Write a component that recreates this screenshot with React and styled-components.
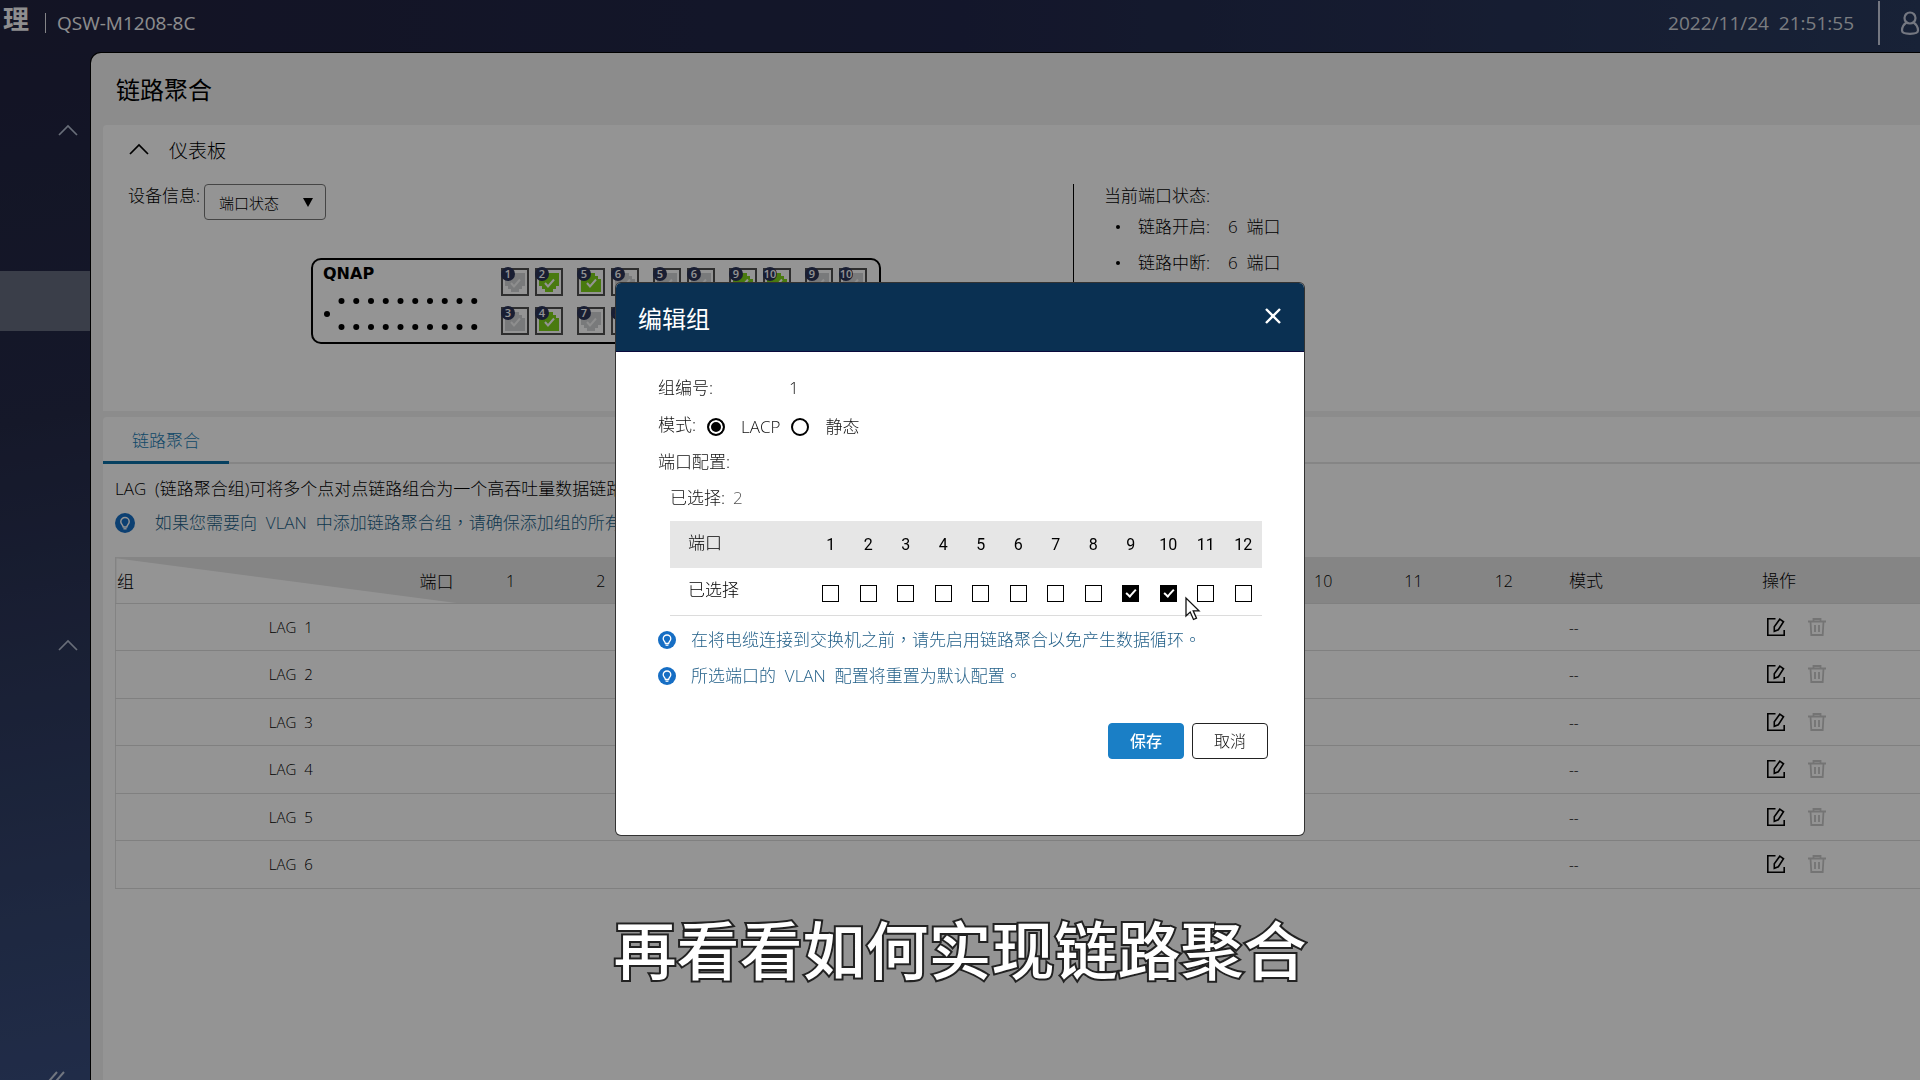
import React, { useState } from "react";
import styled, { createGlobalStyle, css } from "styled-components";

const GlobalStyle = createGlobalStyle`
  *, *::before, *::after { box-sizing: border-box; }
  body {
    margin: 0;
    overflow: hidden;
    font-family: "Open Sans", "Noto Sans CJK TC", "Noto Sans CJK SC", sans-serif;
    font-size: 17px;
    font-weight: 300;
    line-height: 24px;
    color: #000;
  }
  button, input, select { font: inherit; color: inherit; margin: 0; }
`;

const Page = styled.div`
  display: flex;
  flex-direction: column;
  height: 100vh;
  background: linear-gradient(170deg, #20223f 0%, #252a48 30%, #34456f 65%, #405a97 100%);
`;

const TopBar = styled.header`
  display: flex;
  align-items: center;
  height: 53px;
  flex: none;
  overflow: hidden;
  padding-left: 3px;
  padding-bottom: 8px;
  color: #f4f4f6;
  background: linear-gradient(90deg, #21233f 0%, #22274a 50%, #2a3b5f 100%);
`;

const Product = styled.span`
  font-size: 26px;
  font-weight: 700;
  line-height: 36px;
  margin-top: -8px;
`;

const ThinRule = styled.span`
  width: 1px;
  height: 20px;
  margin: 0 11px 0 16px;
  background: #e4e4e8;
`;

const Model = styled.span`
  flex: 1;
  font-size: 19px;
  font-weight: 400;
`;

const Clock = styled.time`
  font-size: 19px;
  font-weight: 400;
  color: #d4d7df;
`;

const UserButton = styled.button`
  display: flex;
  align-items: center;
  height: 44px;
  width: 42px;
  flex: none;
  margin-left: 24px;
  padding: 0 0 0 20px;
  border: 0;
  border-left: 2px solid #c9cede;
  background: none;
  color: #c9cede;
  svg { flex: none; }
`;

const Body = styled.div`
  display: flex;
  flex: 1;
  min-height: 0;
`;

const Sidebar = styled.nav`
  width: 91px;
  flex: none;
  display: flex;
  flex-direction: column;
  overflow: hidden;
`;

const NavToggle = styled.button`
  display: flex;
  justify-content: flex-end;
  align-items: center;
  width: 100%;
  height: ${(p) => p.$height}px;
  flex: none;
  padding: 0 13px 0 0;
  border: 0;
  background: none;
  color: #b4bdd0;
`;

const NavCurrent = styled.a`
  display: block;
  height: 60px;
  flex: none;
  background: #646b7f;
`;

const NavGap = styled.div`
  height: ${(p) => p.$height}px;
  flex: none;
`;

const NavCollapse = styled.button`
  margin-top: auto;
  padding: 0 26px 0 0;
  height: 10px;
  flex: none;
  border: 0;
  overflow: hidden;
  background: none;
  color: #c3cbdc;
  display: flex;
  align-items: flex-start;
  justify-content: flex-end;
  svg { flex: none; }
`;

const Panel = styled.main`
  flex: 1;
  min-width: 0;
  display: flex;
  flex-direction: column;
  gap: 6px;
  padding-left: 12px;
  border-top-left-radius: 10px;
  background: #f2f2f2;
  box-shadow: 0 0 0 1px #000;
`;

const PageTitle = styled.h1`
  margin: 0;
  padding: 21px 13px 13px;
  font-size: 24px;
  line-height: 32px;
  font-weight: 400;
`;

const Card = styled.section`
  background: #fff;
  border-top-left-radius: 4px;
  ${(p) => p.$grow && css`flex: 1;`}
`;

const Dashboard = styled(Card)`
  height: 286px;
  padding: 13px 0 16px 26px;
`;

const Fold = styled.button`
  display: flex;
  align-items: center;
  gap: 20px;
  height: 26px;
  padding: 0;
  border: 0;
  background: none;
  font-size: 19px;
  svg { margin-bottom: 4px; }
`;

const DashGrid = styled.div`
  display: grid;
  grid-template-columns: 944px 1fr;
  height: 206px;
  margin-top: 20px;
`;

const DeviceArea = styled.div`
  display: flex;
  flex-direction: column;
  align-items: center;
  gap: 38px;
  padding-right: 10px;
`;

const Field = styled.div`
  display: flex;
  align-self: stretch;
  align-items: flex-start;
  gap: 4px;
  margin-left: -1px;
`;

const SelectWrap = styled.span`
  position: relative;
  display: inline-flex;
  svg {
    position: absolute;
    right: 13px;
    top: 13px;
    pointer-events: none;
  }
`;

const Select = styled.select`
  appearance: none;
  width: 122px;
  height: 36px;
  padding: 2px 30px 0 14px;
  border: 1px solid #777;
  border-radius: 4px;
  background: #fff;
  font-size: 15px;
`;

const Device = styled.div`
  display: flex;
  width: 570px;
  height: 86px;
  padding: 8px 10px 0;
  border: 2px solid #000;
  border-radius: 10px;
`;

const DeviceFace = styled.div`
  width: 178px;
  flex: none;
`;

const Brand = styled.div`
  font-family: "DejaVu Sans", sans-serif;
  font-size: 16px;
  font-weight: 700;
  line-height: 12px;
  margin-bottom: 9px;
`;

const PortGroups = styled.div`
  display: flex;
  gap: 14px;
  height: 68px;
`;

const PortGroup = styled.div`
  display: grid;
  grid-template-columns: 28px 28px;
  grid-auto-rows: 28px;
  gap: 11px 6px;
`;

const PortBox = styled.span`
  position: relative;
  border: 2px solid #505050;
  svg { display: block; margin: -2px; }
`;

const PortBadge = styled.span`
  position: absolute;
  left: -2px;
  top: -3px;
  width: 14px;
  height: 14px;
  border-radius: 50%;
  background: #2b3458;
  color: #fff;
  font-family: "Open Sans", sans-serif;
  font-size: 11px;
  font-weight: 600;
  line-height: 14px;
  display: flex;
  justify-content: center;
`;

const Status = styled.div`
  border-left: 1px solid #000;
  padding-left: 30px;
`;

const StatusList = styled.ul`
  list-style: none;
  margin: 0;
  padding: 7px 0 0 12px;
  display: grid;
  gap: 12px;
`;

const StatusItem = styled.li`
  display: grid;
  grid-template-columns: 22px 90px auto;
  justify-content: start;
  align-items: center;
  &::before {
    content: "";
    width: 4px;
    height: 4px;
    border-radius: 50%;
    background: #000;
  }
`;

const Tabs = styled.div`
  display: flex;
  height: 47px;
  border-bottom: 2px solid #e6e6e6;
`;

const Tab = styled.button`
  width: 126px;
  height: 47px;
  padding: 3px 0 0;
  border: 0;
  border-bottom: 3px solid #0c6ea6;
  background: none;
  color: #1c7db4;
`;

const LagBody = styled.div`
  padding: 13px 0 0 12px;
`;

const Text = styled.p`
  margin: 0;
  white-space: nowrap;
`;

const Hint = styled.p`
  display: flex;
  align-items: center;
  gap: ${(p) => p.$gap}px;
  margin: ${(p) => p.$space}px 0 0;
  color: #225f88;
  white-space: nowrap;
  svg { flex: none; }
`;

const LagTable = styled.table`
  width: 100%;
  margin-top: 22px;
  table-layout: fixed;
  border-collapse: collapse;
  border-left: 1px solid #e2e2e2;
  th, td { padding: 0; font-weight: 300; text-align: center; }
  th { height: 46px; background: #e6e6e6; border-bottom: 1px solid #dcdcdc; }
  td { height: 47px; padding-bottom: 1px; border-bottom: 1px solid #dcdcdc; font-size: 15px; }
  tr:nth-child(even) td { height: 48px; }
`;

const Col = styled.col`
  ${(p) => p.$w && css`width: ${p.$w}px;`}
`;

const Corner = styled.div`
  display: flex;
  align-items: center;
  justify-content: space-between;
  height: 46px;
  margin-right: 12px;
  padding: 4px 0 0 1px;
`;

const CornerTh = styled.th`
  && { background: linear-gradient(to top right, #fff 48%, #e6e6e6 49%); }
`;

const LeftTh = styled.th`
  &&& { text-align: left; padding-left: 20px; padding-top: 2px; }
`;

const LeftTd = styled.td`
  && { text-align: left; padding-left: 20px; }
`;

const NumTh = styled.th`
  && { font-size: 16px; padding-top: 2px; }
`;

const Actions = styled.div`
  display: flex;
  gap: 22px;
  padding-left: 4px;
`;

const IconButton = styled.button`
  display: flex;
  padding: 0;
  border: 0;
  background: none;
  color: ${(p) => (p.disabled ? "#c9c9c9" : "#000")};
`;

const Overlay = styled.div`
  position: fixed;
  inset: 0;
  display: flex;
  align-items: center;
  justify-content: center;
  padding-top: 38px;
  background: rgba(0, 0, 0, 0.42);
`;

const Modal = styled.form`
  width: 688px;
  height: 552px;
  border-radius: 5px;
  overflow: hidden;
  background: #fff;
  box-shadow: 0 0 0 1px #333;
`;

const ModalHead = styled.div`
  display: flex;
  align-items: center;
  justify-content: space-between;
  height: 69px;
  padding: 4px 22px 0 22px;
  border-bottom: 1px solid #0a0a3c;
  background: #0a3052;
  color: #fff;
`;

const ModalTitle = styled.h2`
  margin: 0;
  font-size: 24px;
  line-height: 32px;
  font-weight: 400;
`;

const CloseButton = styled.button`
  display: flex;
  padding: 0;
  margin-bottom: 6px;
  border: 0;
  background: none;
`;

const ModalBody = styled.div`
  padding: 17px 36px 0 42px;
`;

const Row = styled.div`
  display: flex;
  align-items: center;
  height: 37px;
  color: #111;
`;

const GroupLabel = styled.span`
  width: 131px;
`;

const RadioLabel = styled.label`
  display: flex;
  align-items: center;
  gap: 16px;
  margin-left: 11px;
  padding-top: 4px;
`;

const Radio = styled.input`
  appearance: none;
  width: 18px;
  height: 18px;
  border: 2px solid #000;
  border-radius: 50%;
  background: #fff;
  &:checked { background: #000; box-shadow: inset 0 0 0 2px #fff; }
`;

const Picked = styled.div`
  padding: 6px 0 11px 12px;
  color: #111;
  span { color: #555; margin-left: 8px; }
`;

const PortTable = styled.table`
  width: 592px;
  margin-left: 12px;
  table-layout: fixed;
  border-collapse: collapse;
  th, td { padding: 0; height: 47px; text-align: center; vertical-align: middle; }
  td { padding-top: 2px; }
  thead th { background: #e6e6e6; font-family: Roboto, "Noto Sans CJK TC", sans-serif; font-size: 16px; font-weight: 400; }
  tbody tr { border-bottom: 1px solid #dcdcdc; }
`;

const RowTh = styled.th`
  &&&& { text-align: left; padding: 0 0 3px 18px; font-weight: 300; font-size: 17px; }
`;

const Check = styled.input`
  appearance: none;
  display: inline-block;
  position: relative;
  width: 17px;
  height: 17px;
  border: 1px solid #000;
  vertical-align: middle;
  background: #fff;
  &:checked { background: #000; }
  &:checked::after {
    content: "";
    position: absolute;
    left: 3px;
    top: 3px;
    width: 10px;
    height: 6px;
    border-left: 2px solid #fff;
    border-bottom: 2px solid #fff;
    transform: rotate(-48deg);
  }
`;

const Footer = styled.div`
  display: flex;
  justify-content: flex-end;
  gap: 8px;
  margin-top: 35px;
`;

const Button = styled.button`
  width: 76px;
  height: 36px;
  padding: 0;
  border-radius: 4px;
  border: 1px solid ${(p) => (p.$primary ? "#1a7fc6" : "#222")};
  background: ${(p) => (p.$primary ? "#1a7fc6" : "#fff")};
  color: ${(p) => (p.$primary ? "#fff" : "#111")};
  font-size: 16px;
  font-weight: ${(p) => (p.$primary ? 500 : 300)};
`;

const Caption = styled.div`
  position: fixed;
  left: 0;
  right: 0;
  bottom: 91px;
  text-align: center;
  font-family: "Noto Sans CJK SC", sans-serif;
  font-size: 63px;
  line-height: 84px;
  font-weight: 500;
  color: #fff;
  -webkit-text-stroke: 4px #222;
  paint-order: stroke fill;
  pointer-events: none;
`;

const Pointer = styled.svg`
  position: fixed;
  left: 1184px;
  top: 596px;
`;

const Chevron = () => (
  <svg width="20" height="12" viewBox="0 0 20 12" fill="none" stroke="currentColor" strokeWidth="1.700" aria-hidden="true">
    <path d="M1 11 10 2l9 9" />
  </svg>
);

const Bulb = ({ size }) => (
  <svg width={size} height={size} viewBox="0 0 19 19" aria-hidden="true">
    <circle cx="9.5" cy="9.5" r="9.5" fill="#166ec4" />
    <path d="M9.5 4.2a4 4 0 0 0-4 4c0 2 1.800 2.800 2.300 5h3.400c.5-2.200 2.300-3 2.300-5a4 4 0 0 0-4-4z" fill="none" stroke="#fff" strokeWidth="1.400" />
    <path d="M8 15h3" stroke="#fff" strokeWidth="1.300" />
  </svg>
);

const EditIcon = () => (
  <svg width="20" height="20" viewBox="0 0 20 20" fill="none" stroke="currentColor" strokeWidth="1.600" aria-hidden="true">
    <path d="M9.500 1.800H1.800v16.400h16.400V13" />
    <path d="M13.800 2.200 17.500 4.800l-5.200 8L8.300 14.300V9.800z" />
  </svg>
);

const TrashIcon = () => (
  <svg width="18" height="20" viewBox="0 0 18 20" fill="none" stroke="currentColor" strokeWidth="1.800" aria-hidden="true">
    <path d="M0 4.500h18M5.500 4V2h7v2M2.500 4.500l.8 13.500h11.400l.8-13.500M7 8v7M11 8v7" />
  </svg>
);

const PortShape = ({ on, up }) => (
  <svg width="28" height="28" viewBox="0 0 28 28" aria-hidden="true">
    <path
      d={up ? "M4 24h20V11h-3V8h-3V5h-8v3H7v3H4z" : "M4 5h20v13h-3v3h-3v3h-8v-3H7v-3H4z"}
      fill={on ? "#7ed31a" : "#d0d2d4"}
    />
    <path d="M10 15l3 3.500 6-7" fill="none" stroke={on ? "#fff" : "#f4f4f4"} strokeWidth="2" />
  </svg>
);

const Vents = () => (
  <svg width="160" height="44" viewBox="0 0 160 44" aria-hidden="true">
    <circle cx="4" cy="25" r="3" />
    {Array.from({ length: 10 }, (_, i) => (
      <g key={i}>
        <circle cx={18.500 + i * 14.750} cy="12" r="3" />
        <circle cx={18.500 + i * 14.750} cy="38" r="3" />
      </g>
    ))}
  </svg>
);

const groups = [
  [{ n: 1 }, { n: 2, on: true }, { n: 3, up: true }, { n: 4, on: true, up: true }],
  [{ n: 5, on: true, up: true }, { n: 6, up: true }, { n: 7 }, { n: 8 }],
  [{ n: 5 }, { n: 6 }],
  [{ n: 9, on: true, up: true }, { n: 10, on: true, up: true }],
  [{ n: 9 }, { n: 10 }],
];

const ports = Array.from({ length: 12 }, (_, i) => i + 1);
const lags = [1, 2, 3, 4, 5, 6];

function DashboardCard() {
  return (
    <Dashboard>
      <Fold type="button"><Chevron />仪表板</Fold>
      <DashGrid>
        <DeviceArea>
          <Field>
            <label htmlFor="device-info">设备信息:</label>
            <SelectWrap>
              <Select id="device-info" defaultValue="port">
                <option value="port">端口状态</option>
              </Select>
              <svg width="10" height="10" viewBox="0 0 10 10" aria-hidden="true"><path d="M0 1h10L5 10z" /></svg>
            </SelectWrap>
          </Field>
          <Device>
            <DeviceFace>
              <Brand>QNAP</Brand>
              <Vents />
            </DeviceFace>
            <PortGroups>
              {groups.map((g, i) => (
                <PortGroup key={i}>
                  {g.map((p) => (
                    <PortBox key={p.n}>
                      <PortShape on={p.on} up={p.up} />
                      <PortBadge>{p.n}</PortBadge>
                    </PortBox>
                  ))}
                </PortGroup>
              ))}
            </PortGroups>
          </Device>
        </DeviceArea>
        <Status>
          当前端口状态:
          <StatusList>
            <StatusItem><span>链路开启:</span><span>6 &nbsp;端口</span></StatusItem>
            <StatusItem><span>链路中断:</span><span>6 &nbsp;端口</span></StatusItem>
          </StatusList>
        </Status>
      </DashGrid>
    </Dashboard>
  );
}

function LagCard() {
  return (
    <Card $grow>
      <Tabs role="tablist">
        <Tab type="button" role="tab" aria-selected="true">链路聚合</Tab>
      </Tabs>
      <LagBody>
        <Text>LAG &nbsp;(链路聚合组)可将多个点对点链路组合为一个高吞吐量数据链路</Text>
        <Hint $gap={20} $space={10}>
          <Bulb size={20} />
          <span>如果您需要向 &nbsp;VLAN &nbsp;中添加链路聚合组，请确保添加组的所有</span>
        </Hint>
        <LagTable>
          <colgroup>
            <Col $w={350} />
            {ports.map((n) => <Col key={n} />)}
            <Col $w={193} />
            <Col $w={178} />
          </colgroup>
          <thead>
            <tr>
              <CornerTh><Corner><span>组</span><span>端口</span></Corner></CornerTh>
              {ports.map((n) => <NumTh key={n}>{n}</NumTh>)}
              <LeftTh>模式</LeftTh>
              <LeftTh>操作</LeftTh>
            </tr>
          </thead>
          <tbody>
            {lags.map((n) => (
              <tr key={n}>
                <td>LAG &nbsp;{n}</td>
                {ports.map((p) => <td key={p} />)}
                <LeftTd>--</LeftTd>
                <LeftTd>
                  <Actions>
                    <IconButton type="button" aria-label="编辑"><EditIcon /></IconButton>
                    <IconButton type="button" aria-label="删除" disabled><TrashIcon /></IconButton>
                  </Actions>
                </LeftTd>
              </tr>
            ))}
          </tbody>
        </LagTable>
      </LagBody>
    </Card>
  );
}

function EditGroup() {
  const [mode, setMode] = useState("lacp");
  const [picked, setPicked] = useState([9, 10]);
  const toggle = (n) =>
    setPicked((list) => (list.includes(n) ? list.filter((x) => x !== n) : [...list, n]));

  return (
    <Modal role="dialog" aria-labelledby="edit-title" onSubmit={(e) => e.preventDefault()}>
      <ModalHead>
        <ModalTitle id="edit-title">编辑组</ModalTitle>
        <CloseButton type="button" aria-label="关闭">
          <svg width="18" height="18" viewBox="0 0 18 18" fill="none" stroke="#fff" strokeWidth="2.400">
            <path d="M2 2l14 14M16 2 2 16" />
          </svg>
        </CloseButton>
      </ModalHead>
      <ModalBody>
        <Row><GroupLabel>组编号:</GroupLabel>1</Row>
        <Row>
          模式:
          <RadioLabel>
            <Radio type="radio" name="mode" checked={mode === "lacp"} onChange={() => setMode("lacp")} />
            LACP
          </RadioLabel>
          <RadioLabel>
            <Radio type="radio" name="mode" checked={mode === "static"} onChange={() => setMode("static")} />
            静态
          </RadioLabel>
        </Row>
        <Row>端口配置:</Row>
        <Picked>已选择:<span>{picked.length}</span></Picked>
        <PortTable>
          <colgroup>
            <Col $w={142} />
            {ports.map((n) => <Col key={n} />)}
          </colgroup>
          <thead>
            <tr>
              <RowTh>端口</RowTh>
              {ports.map((n) => <th key={n}>{n}</th>)}
            </tr>
          </thead>
          <tbody>
            <tr>
              <RowTh>已选择</RowTh>
              {ports.map((n) => (
                <td key={n}>
                  <Check type="checkbox" aria-label={`端口 ${n}`} checked={picked.includes(n)} onChange={() => toggle(n)} />
                </td>
              ))}
            </tr>
          </tbody>
        </PortTable>
        <Hint $gap={15} $space={12}>
          <Bulb size={18} />
          <span>在将电缆连接到交换机之前，请先启用链路聚合以免产生数据循环。</span>
        </Hint>
        <Hint $gap={15} $space={12}>
          <Bulb size={18} />
          <span>所选端口的 &nbsp;VLAN &nbsp;配置将重置为默认配置。</span>
        </Hint>
        <Footer>
          <Button type="submit" $primary>保存</Button>
          <Button type="button">取消</Button>
        </Footer>
      </ModalBody>
    </Modal>
  );
}

export default function App() {
  return (
    <>
      <GlobalStyle />
      <Page>
        <TopBar>
          <Product>理</Product>
          <ThinRule />
          <Model>QSW-M1208-8C</Model>
          <Clock>2022/11/24 &nbsp;21:51:55</Clock>
          <UserButton type="button" aria-label="用户">
            <svg width="22" height="26" viewBox="0 0 22 26" fill="none" stroke="currentColor" strokeWidth="2.200">
              <circle cx="10" cy="8" r="5.500" />
              <path d="M6.500 12.500C3.500 14.500 2 17 2 20.500c0 2 3.500 3.300 8 3.300s8-1.300 8-3.300c0-3.500-1.500-6-4.500-8" />
            </svg>
          </UserButton>
        </TopBar>
        <Body>
          <Sidebar>
            <NavGap $height={59} />
            <NavToggle type="button" aria-label="收起" $height={36}><Chevron /></NavToggle>
            <NavGap $height={123} />
            <NavCurrent href="#lag" aria-label="链路聚合" />
            <NavGap $height={296} />
            <NavToggle type="button" aria-label="收起" $height={36}><Chevron /></NavToggle>
            <NavCollapse type="button" aria-label="折叠菜单">
              <svg width="18" height="18" viewBox="0 0 18 18" fill="none" stroke="currentColor" strokeWidth="2">
                <path d="M10 2 3 10l7 8M17 2l-7 8 7 8" />
              </svg>
            </NavCollapse>
          </Sidebar>
          <Panel>
            <PageTitle>链路聚合</PageTitle>
            <DashboardCard />
            <LagCard />
          </Panel>
        </Body>
      </Page>
      <Overlay>
        <EditGroup />
      </Overlay>
      <Pointer width="18" height="26" viewBox="0 0 18 26" aria-hidden="true">
        <path d="M2 2v18l4.200-4 3.300 7.500 3-1.300-3.300-7.400H15z" fill="#fff" stroke="#111" strokeWidth="1.300" />
      </Pointer>
      <Caption>再看看如何实现链路聚合</Caption>
    </>
  );
}
